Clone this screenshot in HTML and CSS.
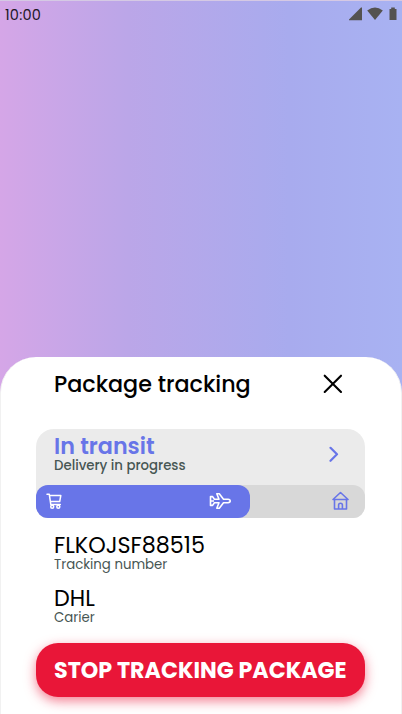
FILE: index.html
```html
<!DOCTYPE html>
<html lang="en">
<head>
<meta charset="utf-8">
<title>Package tracking</title>
<link rel="stylesheet" href="styles.css">
</head>
<body>
<div class="screen">
  <header class="status">
    <span class="time">10:00</span>
    <svg class="signals" width="50" height="14" viewBox="0 0 50 14" fill="#545250"><path d="M0 13.3V12.5L12 0.500H13V13.300z"/><path d="M18.200 3.600Q26 -2.800 33.800 3.600L26 13z"/><path d="M40.500 2H42.200V0.500H45.800V2H47.500V13H40.500z"/></svg>
  </header>
  <main class="sheet">
    <div class="heading">
      <h1 class="title">Package tracking</h1>
      <svg class="close" width="20" height="20" viewBox="0 0 20 20" fill="none" stroke="#000" stroke-width="2.100" stroke-linecap="round"><path d="M1.700 1.700L18 18M18 1.700L1.700 18"/></svg>
    </div>
    <section class="card">
      <div class="summary">
        <div>
          <div class="state">In transit</div>
          <div class="detail">Delivery in progress</div>
        </div>
        <svg class="chevron" width="10" height="16" viewBox="0 0 10 16" fill="none" stroke="#6875e8" stroke-width="2.200" stroke-linecap="round" stroke-linejoin="round"><path d="M1.500 1.800L8 8.300L1.500 14.800"/></svg>
      </div>
      <div class="track">
        <div class="progress">
          <svg width="17" height="17" viewBox="0 0 17 17" fill="none" stroke="#fff" stroke-width="1.500" stroke-linecap="round" stroke-linejoin="round"><path d="M1 1.300H3.300L4.800 11.600H14.300M3.500 2.500H14.800L13.700 8.600H4.600"/><circle cx="6.200" cy="13.800" r="1.500"/><circle cx="12.300" cy="13.800" r="1.500"/></svg>
          <svg width="22" height="18" viewBox="0 0 22 18" fill="none" stroke="#fff" stroke-width="1.600" stroke-linejoin="round"><path d="M1.500 4.600H3.600L5.400 7.300H10L7.800 1.800H10.300L14.500 7.300H19Q21.200 7.500 21.200 9Q21.200 10.500 19 10.700H14.500L10.300 16.200H7.800L10 10.700H5.400L3.600 13.400H1.500zM1.500 9H5"/></svg>
        </div>
        <svg class="house" width="17" height="20" viewBox="0 0 17 20" fill="none" stroke="#6875e8" stroke-width="1.600" stroke-linecap="round" stroke-linejoin="round"><path d="M1 8.500L8.500 1.500L16 8.500zM2.500 8.500V18H14.500V8.500M6.600 18V14Q6.600 12.200 8.500 12.200Q10.400 12.200 10.400 14V18"/></svg>
      </div>
    </section>
    <dl class="facts">
      <dt class="number">FLKOJSF88515</dt>
      <dd class="number-label">Tracking number</dd>
      <dt class="carrier">DHL</dt>
      <dd class="carrier-label">Carier</dd>
    </dl>
    <button class="stop"><span>STOP TRACKING PACKAGE</span></button>
  </main>
</div>
</body>
</html>
```
FILE: styles.css
```css
* { box-sizing: border-box; }
body { margin: 0; font-family: Poppins, Inter, sans-serif; color: #000; }
.screen {
  width: 402px; height: 714px; overflow: hidden;
  display: flex; flex-direction: column;
  border-top: 1px solid #d5c9e4;
  background: linear-gradient(90deg, #d5a6e7 0%, #bba6e8 32%, #a8abee 72%, #a8b2f2 100%);
}
.status {
  height: 356px; padding: 6px 4px 0 5px;
  display: flex; justify-content: space-between; align-items: flex-start;
}
.time { font-size: 14.500px; line-height: 16px; color: #1c1626; letter-spacing: 0.200px; }
.signals { margin-right: -1px; }
.sheet {
  flex: 1; background: #fff; border-radius: 36px 36px 0 0;
  border: solid #f1f1f1; border-width: 0 1px;
  padding: 0 36px 0 35px;
}
.heading {
  height: 72px; padding: 14px 22px 0 18px;
  display: flex; justify-content: space-between; align-items: flex-start;
}
.title { margin: 0; font-size: 22.250px; line-height: 28px; font-weight: 500; white-space: nowrap; }
.close { margin-top: 3px; }
.card { height: 89px; border-radius: 18px 18px 12px 12px; background: #ebebeb; }
.summary { height: 55.500px; padding: 6px 26px 0 18px; display: flex; justify-content: space-between; }
.state { font-size: 22.250px; line-height: 24px; font-weight: 600; color: #6875e8; white-space: nowrap; }
.detail { font-size: 13.300px; line-height: 14px; font-weight: 500; color: #475653; white-space: nowrap; }
.chevron { margin-top: 11px; }
.track {
  height: 33.500px; border-radius: 12px; background: #d8d8d8;
  display: flex; justify-content: space-between; align-items: center; padding-right: 16px;
}
.progress {
  width: 214px; height: 33.500px; padding: 0 19px 0 10px; border-radius: 12px; background: #6875e8;
  display: flex; justify-content: space-between; align-items: center;
}
.facts { margin: 0; height: 125px; padding: 16px 18px 0; white-space: nowrap; }
.facts dd { margin: 0; font-size: 13.300px; line-height: 14px; color: #475653; }
.facts dt { font-size: 22.250px; line-height: 24px; }
.facts .number-label, .facts .carrier-label { line-height: 13px; }
.facts .carrier { margin-top: 16px; }
.stop {
  display: block; width: 329px; height: 53.500px; padding: 0 0 0 18px; border: 0; border-radius: 22px;
  background: #e91638; color: #fff; font: 700 22.250px/55px Poppins, Inter, sans-serif;
  text-align: left; white-space: nowrap;
  box-shadow: 0 4px 12px rgba(233, 22, 56, 0.550);
}
```
